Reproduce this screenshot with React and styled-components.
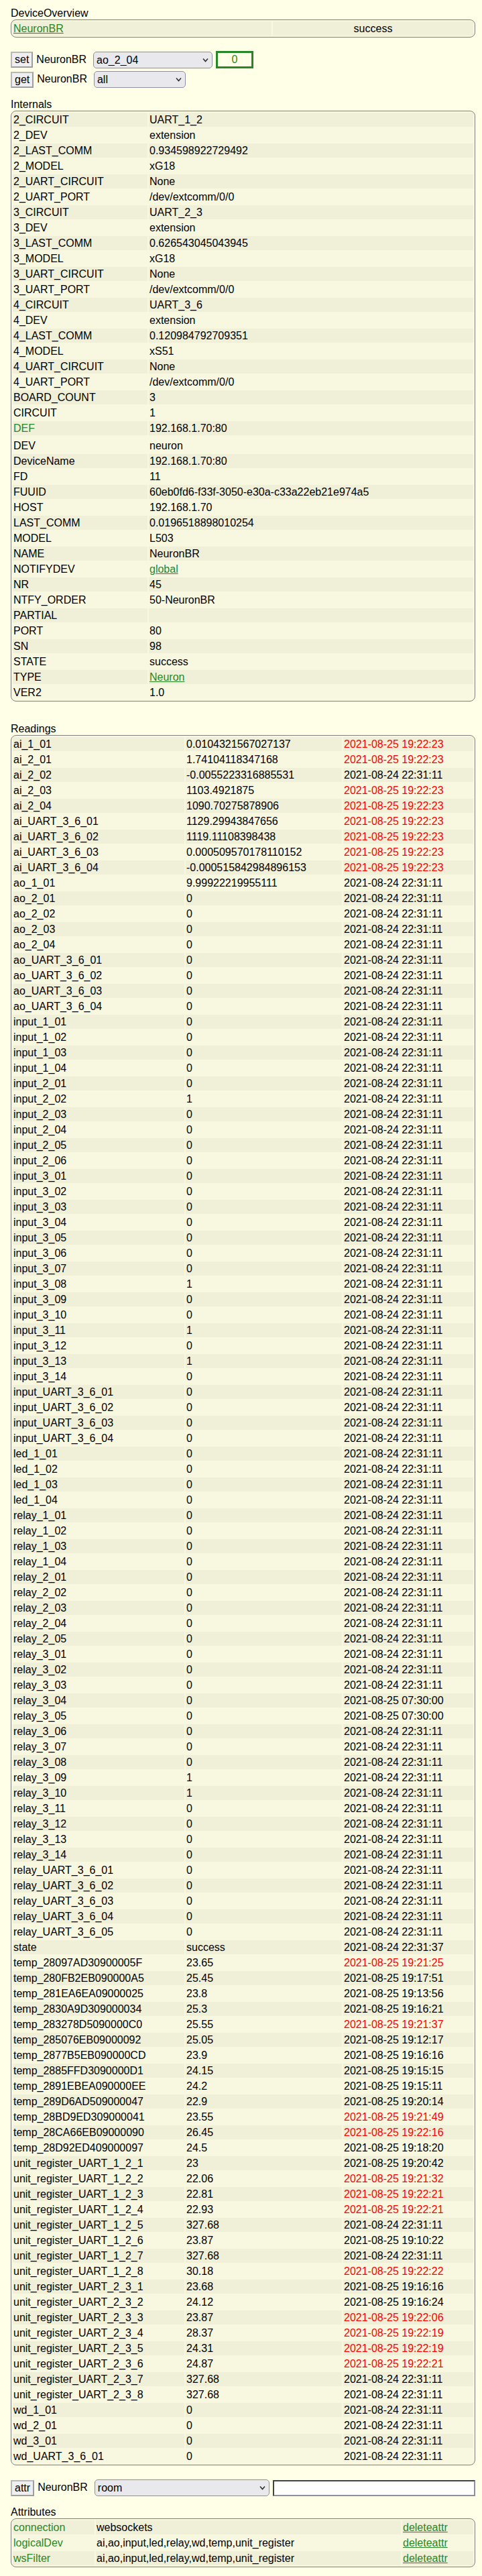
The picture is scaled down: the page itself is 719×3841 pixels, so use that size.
import React from "react";
import styled, { createGlobalStyle } from "styled-components";

const GlobalStyle = createGlobalStyle`
  html, body {
    margin: 0;
    padding: 0;
    background: #ffffe7;
  }
  body {
    font-family: "Liberation Sans", Arial, sans-serif;
    font-size: 16px;
    color: #000;
  }
`;

const GREEN = "#278727";

const Page = styled.div`
  box-sizing: border-box;
  width: 719px;
  height: 3841px;
  padding: 11px 10px 0 16px;
  overflow: hidden;
`;

const Title = styled.div`
  height: 18px;
  line-height: 18px;
`;

const Block = styled.table`
  box-sizing: border-box;
  width: 693px;
  table-layout: fixed;
  border-collapse: separate;
  border-spacing: 2px;
  border: 1px solid #808080;
  border-radius: 8px;
  background: #f8f8e0;
  margin-bottom: ${(p) => p.$after || 0}px;
`;

const Col = styled.col`
  width: ${(p) => p.$w}px;
`;

const Row = styled.tr`
  &:nth-child(odd) td {
    background: #f0f0d8;
  }
`;

const Cell = styled.td`
  padding: ${(p) => (p.$tall ? "4px" : "1px")} 1px 1px;
  line-height: 19px;
  height: 19px;
  white-space: nowrap;
  overflow: hidden;
  text-align: ${(p) => (p.$center ? "center" : "left")};
  color: ${(p) => (p.$hot ? "#ff0000" : p.$green ? GREEN : "#000")};
`;

const Link = styled.a`
  color: ${GREEN};
  text-decoration: underline;
`;

const CommandRow = styled.div`
  display: flex;
  align-items: center;
  height: ${(p) => p.$h}px;
  margin-bottom: ${(p) => p.$after || 0}px;
`;

const CommandButton = styled.button`
  box-sizing: border-box;
  height: 24px;
  margin: 0 5px 0 0;
  padding: 0 4px;
  font: inherit;
  color: #000;
  background: #efeff1;
  border: 2px solid;
  border-color: #b8b8b8 #9e9e9e #9e9e9e #b8b8b8;
  border-radius: 0;
`;

const DeviceLabel = styled.span`
  margin-right: 10px;
  margin-top: -1px;
`;

const SelectBox = styled.div`
  position: relative;
  width: ${(p) => p.$w}px;
  height: 25px;
  margin-right: 5px;
`;

const Select = styled.select`
  appearance: none;
  box-sizing: border-box;
  display: block;
  width: 100%;
  height: 100%;
  padding: 0 20px 0 4px;
  font: inherit;
  color: #000;
  background: #e9e9ed;
  border: 1px solid #8f8f9d;
  border-radius: 5px;
`;

const Chevron = styled.svg`
  position: absolute;
  right: 6px;
  top: 9px;
  width: 9px;
  height: 7px;
  pointer-events: none;
`;

const ValueBox = styled.input`
  box-sizing: border-box;
  width: 56px;
  height: 26px;
  padding: 0;
  font: inherit;
  text-align: center;
  color: ${GREEN};
  background: transparent;
  border: 3px solid ${GREEN};
  border-radius: 0;
  outline: none;
`;

const TextBox = styled.input`
  box-sizing: border-box;
  width: 302px;
  height: 24px;
  padding: 0 2px;
  font: inherit;
  background: #fff;
  border: 2px inset #8f8f9d;
  border-radius: 0;
`;

const DropDown = ({ width, value, options }) => (
  <SelectBox $w={width}>
    <Select defaultValue={value}>
      {options.map((o) => (
        <option key={o}>{o}</option>
      ))}
    </Select>
    <Chevron viewBox="0 0 9 7" fill="none" stroke="#2b2b2b" strokeWidth="1.5">
      <path d="M1 1.5 L4.5 5.5 L8 1.5" />
    </Chevron>
  </SelectBox>
);

const internals = [
  ["2_CIRCUIT", "UART_1_2"],
  ["2_DEV", "extension"],
  ["2_LAST_COMM", "0.934598922729492"],
  ["2_MODEL", "xG18"],
  ["2_UART_CIRCUIT", "None"],
  ["2_UART_PORT", "/dev/extcomm/0/0"],
  ["3_CIRCUIT", "UART_2_3"],
  ["3_DEV", "extension"],
  ["3_LAST_COMM", "0.626543045043945"],
  ["3_MODEL", "xG18"],
  ["3_UART_CIRCUIT", "None"],
  ["3_UART_PORT", "/dev/extcomm/0/0"],
  ["4_CIRCUIT", "UART_3_6"],
  ["4_DEV", "extension"],
  ["4_LAST_COMM", "0.120984792709351"],
  ["4_MODEL", "xS51"],
  ["4_UART_CIRCUIT", "None"],
  ["4_UART_PORT", "/dev/extcomm/0/0"],
  ["BOARD_COUNT", "3"],
  ["CIRCUIT", "1"],
  ["DEF", "192.168.1.70:80", { green: true }],
  ["DEV", "neuron", { tall: true }],
  ["DeviceName", "192.168.1.70:80"],
  ["FD", "11"],
  ["FUUID", "60eb0fd6-f33f-3050-e30a-c33a22eb21e974a5"],
  ["HOST", "192.168.1.70"],
  ["LAST_COMM", "0.0196518898010254"],
  ["MODEL", "L503"],
  ["NAME", "NeuronBR"],
  ["NOTIFYDEV", "global", { link: true }],
  ["NR", "45"],
  ["NTFY_ORDER", "50-NeuronBR"],
  ["PARTIAL", ""],
  ["PORT", "80"],
  ["SN", "98"],
  ["STATE", "success"],
  ["TYPE", "Neuron", { link: true }],
  ["VER2", "1.0"],
];

const BASE = "2021-08-24 22:31:11";
const today = (t) => `2021-08-25 ${t}`;

// name, value, time, fresh reading flag
const series = (prefix, from, to, ones = []) =>
  Array.from({ length: to - from + 1 }, (_, i) => {
    const n = from + i;
    return [`${prefix}${String(n).padStart(2, "0")}`, ones.includes(n) ? "1" : "0", BASE];
  });

const readings = [
  ["ai_1_01", "0.0104321567027137", today("19:22:23"), true],
  ["ai_2_01", "1.74104118347168", today("19:22:23"), true],
  ["ai_2_02", "-0.0055223316885531", BASE],
  ["ai_2_03", "1103.4921875", today("19:22:23"), true],
  ["ai_2_04", "1090.70275878906", today("19:22:23"), true],
  ["ai_UART_3_6_01", "1129.29943847656", today("19:22:23"), true],
  ["ai_UART_3_6_02", "1119.11108398438", today("19:22:23"), true],
  ["ai_UART_3_6_03", "0.000509570178110152", today("19:22:23"), true],
  ["ai_UART_3_6_04", "-0.000515842984896153", today("19:22:23"), true],
  ["ao_1_01", "9.99922219955111", BASE],
  ...series("ao_2_", 1, 4),
  ...series("ao_UART_3_6_", 1, 4),
  ...series("input_1_", 1, 4),
  ...series("input_2_", 1, 6, [2]),
  ...series("input_3_", 1, 14, [8, 11, 13]),
  ...series("input_UART_3_6_", 1, 4),
  ...series("led_1_", 1, 4),
  ...series("relay_1_", 1, 4),
  ...series("relay_2_", 1, 5),
  ...series("relay_3_", 1, 3),
  ["relay_3_04", "0", today("07:30:00")],
  ["relay_3_05", "0", today("07:30:00")],
  ...series("relay_3_", 6, 14, [9, 10]),
  ...series("relay_UART_3_6_", 1, 5),
  ["state", "success", "2021-08-24 22:31:37"],
  ["temp_28097AD30900005F", "23.65", today("19:21:25"), true],
  ["temp_280FB2EB090000A5", "25.45", today("19:17:51")],
  ["temp_281EA6EA09000025", "23.8", today("19:13:56")],
  ["temp_2830A9D309000034", "25.3", today("19:16:21")],
  ["temp_283278D5090000C0", "25.55", today("19:21:37"), true],
  ["temp_285076EB09000092", "25.05", today("19:12:17")],
  ["temp_2877B5EB090000CD", "23.9", today("19:16:16")],
  ["temp_2885FFD3090000D1", "24.15", today("19:15:15")],
  ["temp_2891EBEA090000EE", "24.2", today("19:15:11")],
  ["temp_289D6AD509000047", "22.9", today("19:20:14")],
  ["temp_28BD9ED309000041", "23.55", today("19:21:49"), true],
  ["temp_28CA66EB09000090", "26.45", today("19:22:16"), true],
  ["temp_28D92ED409000097", "24.5", today("19:18:20")],
  ["unit_register_UART_1_2_1", "23", today("19:20:42")],
  ["unit_register_UART_1_2_2", "22.06", today("19:21:32"), true],
  ["unit_register_UART_1_2_3", "22.81", today("19:22:21"), true],
  ["unit_register_UART_1_2_4", "22.93", today("19:22:21"), true],
  ["unit_register_UART_1_2_5", "327.68", BASE],
  ["unit_register_UART_1_2_6", "23.87", today("19:10:22")],
  ["unit_register_UART_1_2_7", "327.68", BASE],
  ["unit_register_UART_1_2_8", "30.18", today("19:22:22"), true],
  ["unit_register_UART_2_3_1", "23.68", today("19:16:16")],
  ["unit_register_UART_2_3_2", "24.12", today("19:16:24")],
  ["unit_register_UART_2_3_3", "23.87", today("19:22:06"), true],
  ["unit_register_UART_2_3_4", "28.37", today("19:22:19"), true],
  ["unit_register_UART_2_3_5", "24.31", today("19:22:19"), true],
  ["unit_register_UART_2_3_6", "24.87", today("19:22:21"), true],
  ["unit_register_UART_2_3_7", "327.68", BASE],
  ["unit_register_UART_2_3_8", "327.68", BASE],
  ["wd_1_01", "0", BASE],
  ["wd_2_01", "0", BASE],
  ["wd_3_01", "0", BASE],
  ["wd_UART_3_6_01", "0", BASE],
];

const attributes = [
  ["connection", "websockets"],
  ["logicalDev", "ai,ao,input,led,relay,wd,temp,unit_register"],
  ["wsFilter", "ai,ao,input,led,relay,wd,temp,unit_register"],
];

const App = () => (
  <Page>
    <GlobalStyle />

    <Title>DeviceOverview</Title>
    <Block $after={20}>
      <colgroup>
        <Col $w={386} />
        <Col $w={299} />
      </colgroup>
      <tbody>
        <Row>
          <Cell>
            <Link href="#">NeuronBR</Link>
          </Cell>
          <Cell $center>success</Cell>
        </Row>
      </tbody>
    </Block>

    <CommandRow $h={26} $after={4}>
      <CommandButton>set</CommandButton>
      <DeviceLabel>NeuronBR</DeviceLabel>
      <DropDown width={178} value="ao_2_04" options={["ao_2_04"]} />
      <ValueBox defaultValue="0" />
    </CommandRow>
    <CommandRow $h={25} $after={16}>
      <CommandButton>get</CommandButton>
      <DeviceLabel>NeuronBR</DeviceLabel>
      <DropDown width={137} value="all" options={["all"]} />
    </CommandRow>

    <Title>Internals</Title>
    <Block $after={32}>
      <colgroup>
        <Col $w={201} />
        <Col $w={484} />
      </colgroup>
      <tbody>
        {internals.map(([name, value, opts = {}]) => (
          <Row key={name}>
            <Cell $green={opts.green} $tall={opts.tall}>{name}</Cell>
            <Cell $tall={opts.tall}>
              {opts.link ? <Link href="#">{value}</Link> : value}
            </Cell>
          </Row>
        ))}
      </tbody>
    </Block>

    <Title>Readings</Title>
    <Block $after={21}>
      <colgroup>
        <Col $w={256} />
        <Col $w={233} />
        <Col $w={194} />
      </colgroup>
      <tbody>
        {readings.map(([name, value, time, hot]) => (
          <Row key={name}>
            <Cell>{name}</Cell>
            <Cell>{value}</Cell>
            <Cell $hot={hot}>{time}</Cell>
          </Row>
        ))}
      </tbody>
    </Block>

    <CommandRow $h={25} $after={15}>
      <CommandButton>attr</CommandButton>
      <DeviceLabel>NeuronBR</DeviceLabel>
      <DropDown width={261} value="room" options={["room"]} />
      <TextBox />
    </CommandRow>

    <Title>Attributes</Title>
    <Block>
      <colgroup>
        <Col $w={122} />
        <Col $w={455} />
        <Col $w={106} />
      </colgroup>
      <tbody>
        {attributes.map(([name, value]) => (
          <Row key={name}>
            <Cell $green>{name}</Cell>
            <Cell>{value}</Cell>
            <Cell>
              <Link href="#">deleteattr</Link>
            </Cell>
          </Row>
        ))}
      </tbody>
    </Block>
  </Page>
);

export default App;
